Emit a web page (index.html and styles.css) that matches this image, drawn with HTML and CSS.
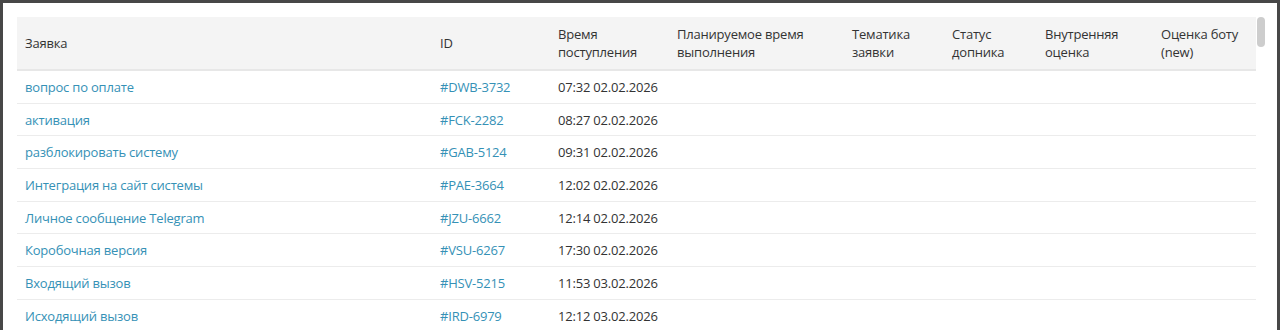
FILE: index.html
```html
<!DOCTYPE html>
<html lang="ru">
<head>
<meta charset="utf-8">
<title>Заявки</title>
<link rel="stylesheet" href="styles.css">
</head>
<body>
<div class="window">
  <div class="scroll">
    <table class="grid">
      <colgroup>
        <col class="c1"><col class="c2"><col class="c3"><col class="c4"><col class="c5"><col class="c6"><col class="c7"><col class="c8">
      </colgroup>
      <thead>
        <tr>
          <th>Заявка</th>
          <th>ID</th>
          <th>Время<br>поступления</th>
          <th>Планируемое время<br>выполнения</th>
          <th>Тематика<br>заявки</th>
          <th>Статус<br>допника</th>
          <th>Внутренняя<br>оценка</th>
          <th>Оценка боту<br>(new)</th>
        </tr>
      </thead>
      <tbody>
        <tr><td><a href="#">вопрос по оплате</a></td><td><a href="#">#DWB-3732</a></td><td>07:32 02.02.2026</td><td></td><td></td><td></td><td></td><td></td></tr>
        <tr><td><a href="#">активация</a></td><td><a href="#">#FCK-2282</a></td><td>08:27 02.02.2026</td><td></td><td></td><td></td><td></td><td></td></tr>
        <tr><td><a href="#">разблокировать систему</a></td><td><a href="#">#GAB-5124</a></td><td>09:31 02.02.2026</td><td></td><td></td><td></td><td></td><td></td></tr>
        <tr><td><a href="#">Интеграция на сайт системы</a></td><td><a href="#">#PAE-3664</a></td><td>12:02 02.02.2026</td><td></td><td></td><td></td><td></td><td></td></tr>
        <tr><td><a href="#">Личное сообщение Telegram</a></td><td><a href="#">#JZU-6662</a></td><td>12:14 02.02.2026</td><td></td><td></td><td></td><td></td><td></td></tr>
        <tr><td><a href="#">Коробочная версия</a></td><td><a href="#">#VSU-6267</a></td><td>17:30 02.02.2026</td><td></td><td></td><td></td><td></td><td></td></tr>
        <tr><td><a href="#">Входящий вызов</a></td><td><a href="#">#HSV-5215</a></td><td>11:53 03.02.2026</td><td></td><td></td><td></td><td></td><td></td></tr>
        <tr><td><a href="#">Исходящий вызов</a></td><td><a href="#">#IRD-6979</a></td><td>12:12 03.02.2026</td><td></td><td></td><td></td><td></td><td></td></tr>
      </tbody>
    </table>
    <div class="thumb"></div>
  </div>
</div>
</body>
</html>
```

FILE: styles.css
```css
html, body {
  margin: 0;
  padding: 0;
  height: 100%;
}
body {
  background: #474747;
  padding: 3px 3px 0 3px;
  box-sizing: border-box;
  overflow: hidden;
  font-family: "Open Sans", "Noto Sans", sans-serif;
  font-size: 13px;
  letter-spacing: -0.2px;
  color: #333333;
}
.window {
  background: #ffffff;
  height: 100%;
  padding: 14px 21px 0 14px;
  box-sizing: border-box;
}
.scroll {
  position: relative;
}
.grid {
  width: 1239px;
  border-collapse: collapse;
  table-layout: fixed;
}
.c1 { width: 415px; }
.c2 { width: 118px; }
.c3 { width: 119px; }
.c4 { width: 175px; }
.c5 { width: 100px; }
.c6 { width: 93px; }
.c7 { width: 116px; }
.c8 { width: 103px; }
.grid th {
  background: #f4f4f4;
  font-weight: normal;
  text-align: left;
  vertical-align: middle;
  padding: 8px 8px 8px 8px;
  line-height: 18px;
  height: 36px;
  border-bottom: 2px solid #e7e7e7;
  color: #333333;
}
.grid td {
  padding: 0 8px;
  height: 31.7px;
  line-height: 18px;
  border-bottom: 1px solid #ececec;
  white-space: nowrap;
}
.grid a {
  color: #3591b6;
  text-decoration: none;
}
.thumb {
  position: absolute;
  left: 1240px;
  top: 0;
  width: 8px;
  height: 30px;
  border-radius: 4px;
  background: #cdcdcd;
}
```
